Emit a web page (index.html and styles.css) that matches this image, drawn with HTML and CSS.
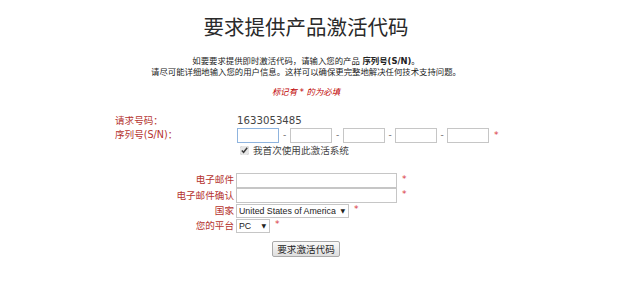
FILE: index.html
```html
<!DOCTYPE html>
<html lang="zh-CN">
<head>
    <meta charset="UTF-8">
    <title>要求提供产品激活代码</title>
    <link rel="stylesheet" href="styles.css">
</head>
<body>
    <div class="page">
        <h1 class="title">要求提供产品激活代码</h1>
        <div class="intro">
            <p>如要要求提供即时激活代码，请输入您的产品 <b>序列号(S/N)</b>。</p>
            <p>请尽可能详细地输入您的用户信息。这样可以确保更完整地解决任何技术支持问题。</p>
        </div>
        <p class="note">标记有 * 的为必填</p>

        <form class="form">
            <div class="serial-grid">
                <span class="label">请求号码：</span>
                <span class="value">1633053485</span>

                <span class="label">序列号(S/N)：</span>
                <div class="serial">
                    <input type="text" class="sn focus">
                    <span class="dash">-</span>
                    <input type="text" class="sn">
                    <span class="dash">-</span>
                    <input type="text" class="sn">
                    <span class="dash">-</span>
                    <input type="text" class="sn">
                    <span class="dash">-</span>
                    <input type="text" class="sn">
                    <span class="star">*</span>
                </div>

                <span></span>
                <label class="first-time"><input type="checkbox" checked> 我首次使用此激活系统</label>
            </div>

            <div class="user-grid">
                <span class="label">电子邮件</span>
                <div class="field"><input type="text" class="wide"><span class="star">*</span></div>

                <span class="label">电子邮件确认</span>
                <div class="field"><input type="text" class="wide"><span class="star">*</span></div>

                <span class="label">国家</span>
                <div class="field">
                    <span class="select country">
                        <select>
                            <option>United States of America</option>
                        </select>
                    </span>
                    <span class="star">*</span>
                </div>

                <span class="label">您的平台</span>
                <div class="field">
                    <span class="select platform">
                        <select>
                            <option>PC</option>
                        </select>
                    </span>
                    <span class="star">*</span>
                </div>
            </div>

            <div class="actions">
                <button type="button" class="submit">要求激活代码</button>
            </div>
        </form>
    </div>
</body>
</html>
```

FILE: styles.css
```css
body {
    margin: 0;
    background-color: #fff;
    color: #222;
    font-family: "DejaVu Sans", "Noto Sans CJK SC", sans-serif;
}
.page {
    width: 612px;
}
.title {
    margin: 0;
    padding-top: 16px;
    font-family: "Liberation Serif", "Noto Sans CJK SC", serif;
    font-size: 20.5px;
    font-weight: normal;
    line-height: 24px;
    text-align: center;
    color: #2a2a2a;
}
.intro {
    margin-top: 16px;
    text-align: center;
    font-size: 8.4px;
    line-height: 10.5px;
    color: #222;
}
.intro p {
    margin: 0;
}
.note {
    margin: 10px 0 0;
    text-align: center;
    font-size: 8.4px;
    line-height: 10px;
    font-style: italic;
    color: #c00000;
}
.form {
    margin: 0;
}
.serial-grid {
    display: grid;
    grid-template-columns: 122px auto;
    grid-template-rows: 13px 16px 14px;
    align-items: center;
    margin: 17px 0 0 115px;
}
.label {
    font-size: 9.6px;
    line-height: 12px;
    color: #b5332e;
    white-space: nowrap;
}
.value {
    font-size: 10.2px;
    color: #444;
    line-height: 13px;
}
.serial {
    display: flex;
    align-items: center;
    height: 16px;
}
.sn {
    box-sizing: border-box;
    width: 42px;
    height: 15px;
    margin: 0;
    padding: 0 2px;
    border: 1px solid #c6c6c6;
    font-size: 9px;
}
.sn.focus {
    border-color: #8fb4de;
}
.dash {
    width: 11px;
    text-align: center;
    font-size: 9px;
    color: #666;
}
.dash:nth-of-type(3),
.dash:nth-of-type(4) {
    width: 10px;
}
.star {
    margin-left: 5px;
    font-size: 9px;
    line-height: 9px;
    color: #d9363e;
}
.first-time {
    display: flex;
    align-items: center;
    gap: 4px;
    height: 14px;
    padding-left: 3px;
    font-size: 9.6px;
    color: #444;
}
.first-time input {
    width: 9px;
    height: 9px;
    margin: 0;
    accent-color: #e6e6e6;
}
.user-grid {
    display: grid;
    grid-template-columns: 236px auto;
    grid-template-rows: 16px 15px 15px 15px;
    align-items: center;
    margin-top: 15px;
}
.user-grid .label {
    text-align: right;
    padding-right: 2px;
}
.field {
    display: flex;
    align-items: center;
    height: 15px;
}
.field .star {
    align-self: flex-start;
    margin-top: 2px;
}
.wide {
    box-sizing: border-box;
    width: 161px;
    height: 15px;
    margin: 0;
    border: 1px solid #c6c6c6;
}
.select {
    position: relative;
    display: flex;
    height: 14px;
}
.select select {
    box-sizing: border-box;
    height: 14px;
    margin: 0;
    padding: 0 12px 0 2px;
    border: 1px solid #c6c6c6;
    border-radius: 0;
    background: #fff;
    font-family: "Liberation Sans", sans-serif;
    font-size: 8.8px;
    line-height: 12px;
    color: #222;
    appearance: none;
    -webkit-appearance: none;
}
.select::after {
    content: "▼";
    position: absolute;
    right: 4px;
    top: 3px;
    font-size: 6px;
    line-height: 8px;
    color: #222;
    pointer-events: none;
}
.country select {
    width: 113px;
}
.platform select {
    width: 34px;
}
.actions {
    display: flex;
    justify-content: center;
    width: 612px;
    margin-top: 8px;
}
.submit {
    height: 16px;
    padding: 0 4px;
    border: 1px solid #a9a9a9;
    border-radius: 2px;
    background: linear-gradient(#fafafa, #dedede);
    font-family: "Noto Sans CJK SC", sans-serif;
    font-size: 9.6px;
    line-height: 14px;
    color: #222;
}
```
